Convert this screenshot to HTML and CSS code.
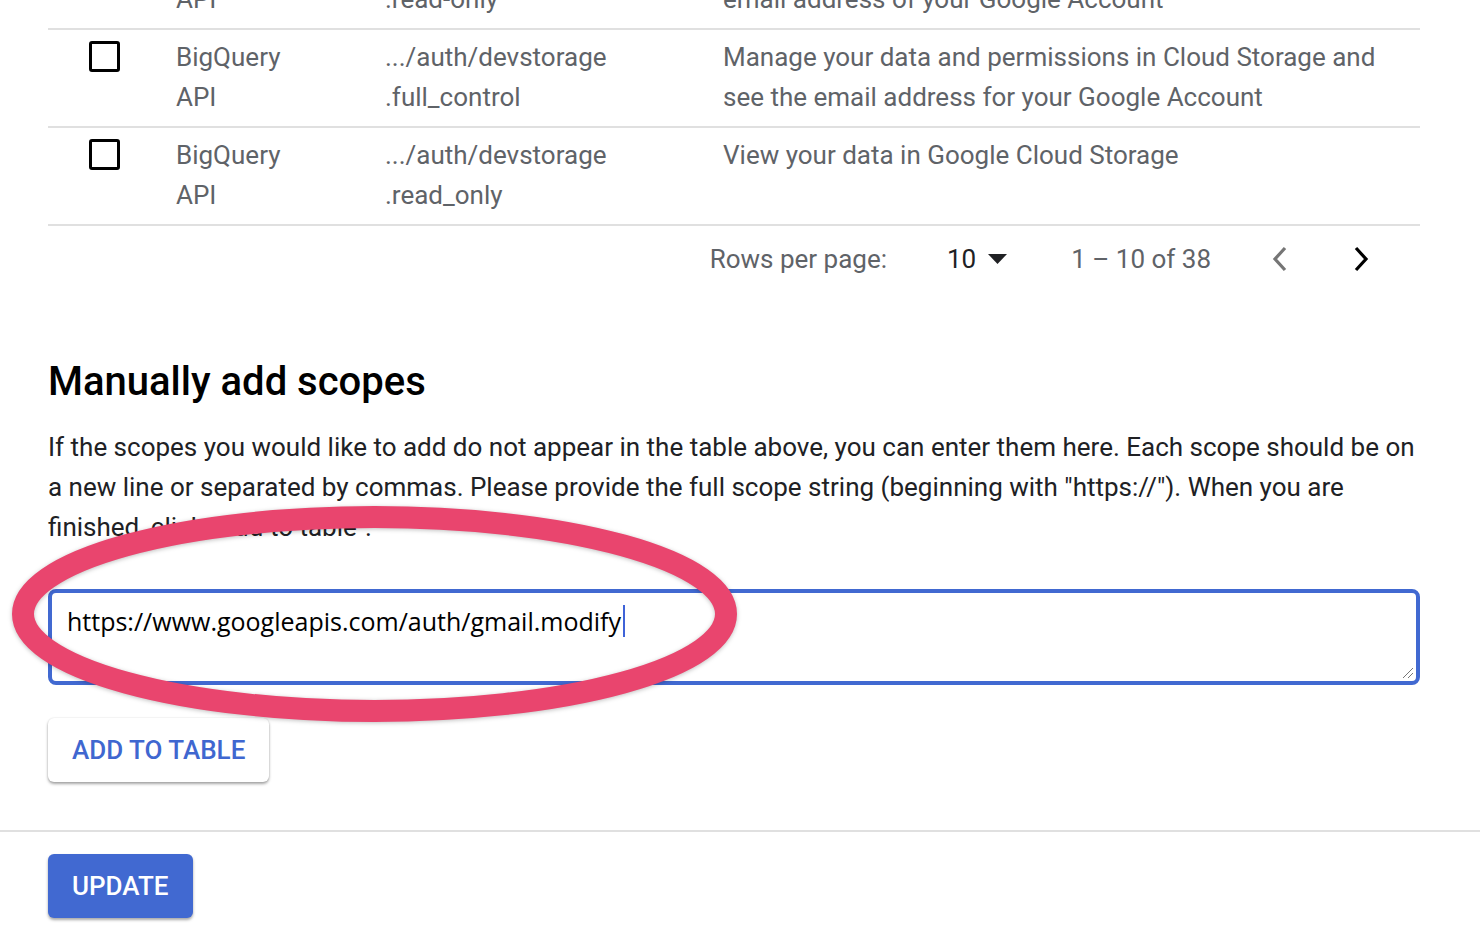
FILE: index.html
```html
<!DOCTYPE html>
<html>
<head>
<meta charset="utf-8">
<link rel="stylesheet" href="styles.css">
</head>
<body>
<div class="page">
  <div class="content">
    <div class="table">
      <div class="row first">
        <div class="cell check"></div>
        <div class="cell">BigQuery<br>API</div>
        <div class="cell">.../auth/devstorage<br>.read-only</div>
        <div class="cell">View your data across Google Cloud services and see the<br>email address of your Google Account</div>
      </div>
      <div class="row">
        <div class="cell check"><span class="box"></span></div>
        <div class="cell">BigQuery<br>API</div>
        <div class="cell">.../auth/devstorage<br>.full_control</div>
        <div class="cell">Manage your data and permissions in Cloud Storage and<br>see the email address for your Google Account</div>
      </div>
      <div class="row">
        <div class="cell check"><span class="box"></span></div>
        <div class="cell">BigQuery<br>API</div>
        <div class="cell">.../auth/devstorage<br>.read_only</div>
        <div class="cell">View your data in Google Cloud Storage</div>
      </div>
    </div>
    <div class="pager">
      <span class="pager-label">Rows per page:</span>
      <span class="pager-select">10<svg class="tri" width="19" height="10" viewBox="0 0 19 10"><path d="M0 0 L19 0 L9.5 10 Z" fill="#202124"/></svg></span>
      <span class="pager-range">1 – 10 of 38</span>
      <svg class="chev" width="20" height="26" viewBox="0 0 20 26"><polyline points="15,2 5,13 15,24" fill="none" stroke="#757575" stroke-width="3.2"/></svg>
      <svg class="chev next" width="20" height="26" viewBox="0 0 20 26"><polyline points="5,2 15,13 5,24" fill="none" stroke="#000" stroke-width="3.2"/></svg>
    </div>

    <h2 class="title">Manually add scopes</h2>
    <p class="desc">If the scopes you would like to add do not appear in the table above, you can enter them here. Each scope should be on a new line or separated by commas. Please provide the full scope string (beginning with "https://"). When you are finished, click "Add to table".</p>

    <div class="field-wrap">
      <div class="field"><span class="field-text">https://www.googleapis.com/auth/gmail.modify</span><span class="caret"></span></div>
      <svg class="grip" width="12" height="12" viewBox="0 0 12 12"><line x1="1" y1="11" x2="11" y2="1" stroke="#777" stroke-width="1"/><line x1="6" y1="11" x2="11" y2="6" stroke="#777" stroke-width="1"/></svg>
      <svg class="mark" width="780" height="240" viewBox="0 0 780 240"><ellipse cx="326.5" cy="115" rx="351.5" ry="97" fill="none" stroke="#e9456e" stroke-width="22"/></svg>
    </div>

    <button class="btn-outline">ADD TO TABLE</button>
  </div>
  <div class="divider"></div>
  <div class="content footer">
    <button class="btn-primary">UPDATE</button>
  </div>
</div>
</body>
</html>
```

FILE: styles.css
```css
html, body {
  margin: 0;
  padding: 0;
  background: #fff;
  overflow: hidden;
}
body {
  font-family: Roboto, "Liberation Sans", sans-serif;
  color: #202124;
  width: 1480px;
  height: 942px;
}
.content {
  padding: 0 60px 0 48px;
  width: 1372px;
}
.table {
  margin-top: -68px;
}
.row {
  display: grid;
  grid-template-columns: 128px 209px 338px 697px;
  border-bottom: 2px solid #e0e0e0;
  padding: 7px 0 9px;
  font-size: 26px;
  line-height: 40px;
  color: #5f6368;
  height: 80px;
}
.cell.check {
  padding-left: 41px;
  padding-top: 4px;
}
.box {
  display: block;
  width: 25px;
  height: 25px;
  border: 3px solid #000;
  border-radius: 3px;
}
.pager {
  display: flex;
  align-items: center;
  justify-content: flex-end;
  height: 65px;
  font-size: 26px;
  color: #5f6368;
  padding-right: 49px;
}
.pager-label {
  margin-right: 60px;
}
.pager-select {
  color: #202124;
  display: flex;
  align-items: center;
  margin-right: 64px;
}
.tri {
  margin-left: 12px;
}
.pager-range {
  margin-right: 59px;
}
.chev.next {
  margin-left: 61px;
}
.title {
  margin: 67px 0 0;
  font-size: 40px;
  line-height: 48px;
  font-weight: 500;
  color: #000;
}
.desc {
  margin: 21px 0 0;
  font-size: 26px;
  line-height: 40px;
  color: #202124;
}
.field-wrap {
  position: relative;
  margin-top: 42px;
}
.field {
  height: 80px;
  border: 4px solid #4169d1;
  border-radius: 8px;
  padding: 8px 15px 0;
  box-sizing: content-box;
  width: 1334px;
  font-family: "Open Sans", "DejaVu Sans", sans-serif;
  font-size: 25px;
  line-height: 40px;
  color: #000;
  display: flex;
  align-items: flex-start;
}
.caret {
  display: inline-block;
  width: 2px;
  height: 32px;
  margin-top: 4px;
  margin-left: 2px;
  background: #3f63d8;
}
.grip {
  position: absolute;
  right: 6px;
  bottom: 6px;
}
.mark {
  position: absolute;
  left: 0;
  top: -90px;
  overflow: visible;
  pointer-events: none;
  filter: drop-shadow(0 1px 2px rgba(0,0,0,0.25));
}
.btn-outline {
  margin-top: 33px;
  height: 64px;
  padding: 0 24px;
  background: #fff;
  border: none;
  border-radius: 6px;
  box-shadow: 0 2px 3px rgba(0,0,0,0.35), 0 0 2px rgba(0,0,0,0.12);
  color: #3f67d0;
  font-family: Roboto, "Liberation Sans", sans-serif;
  font-size: 26px;
  font-weight: 500;
  display: block;
}
.divider {
  margin-top: 48px;
  height: 2px;
  background: #e0e0e0;
  width: 1480px;
}
.footer {
  padding-top: 22px;
}
.btn-primary {
  height: 64px;
  padding: 0 24px;
  background: #4169d1;
  color: #fff;
  border: none;
  border-radius: 6px;
  box-shadow: 0 2px 3px rgba(0,0,0,0.35);
  font-family: Roboto, "Liberation Sans", sans-serif;
  font-size: 26px;
  font-weight: 500;
  display: block;
}
```
